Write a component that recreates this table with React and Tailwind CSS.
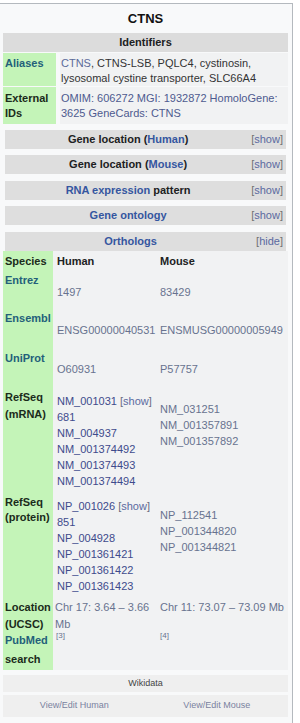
import React from "react";

const link = "text-[#3556a0]";
const lbLink = "text-[#23607a]";
const lbPlain = "text-[#1b2b1b]";

const Collapsible = ({ children, toggle = "show", mt = "mt-[6px]" }) => (
  <div className={`${mt} mx-[2px] h-[19px] bg-[#dedede] flex items-center pr-[3px]`}>
    <div className="flex-1 text-center font-bold">{children}</div>
    <span className="text-[#707070]">
      [<span className="text-[#5b6aa0]">{toggle}</span>]
    </span>
  </div>
);

const OrthoRow = ({ label, labelClass, h, lpt, human, hpt, mouse, mpt, lh = "leading-[16px]" }) => (
  <div className={`grid grid-cols-[50px_107px_1fr] ${h}`}>
    <div className={`bg-[#c4f4b8] font-bold pl-[2px] ${lpt} ${lh} ${labelClass}`}>{label}</div>
    <div className={`pl-[4px] ${hpt} leading-[16px]`}>{human}</div>
    <div className={`${mpt} leading-[16px]`}>{mouse}</div>
  </div>
);

const App = () => {
  const humanNm = ["NM_004937", "NM_001374492", "NM_001374493", "NM_001374494"];
  const humanNp = ["NP_004928", "NP_001361421", "NP_001361422", "NP_001361423"];

  return (
    <div className="w-[300px] h-[723px] bg-white overflow-hidden font-['Liberation_Sans',Arial,sans-serif] text-[11px] text-[#202122]">
      <div className="mt-[3px] w-[293px] h-[730px] border-t border-r border-[#b4b9be] bg-[#f8f9fa] pl-[3px] pr-[4px]">
        {/* title */}
        <div className="h-[29px] flex items-center justify-center font-bold text-[13px] text-[#111]">
          CTNS
        </div>

        <div className="h-[19px] bg-[#dcdcdc] flex items-center justify-center font-bold">
          Identifiers
        </div>

        {/* Aliases */}
        <div className="mt-[1px] grid grid-cols-[53px_1fr] gap-x-[4px] h-[33px]">
          <div className={`bg-[#c4f4b8] font-bold pl-[2px] pt-[3px] leading-[15px] ${lbLink}`}>Aliases</div>
          <div className="bg-[#f1f2f3] pl-[1px] pt-[3px] leading-[15px] text-[#333]">
            <span className="text-[#5b6a9a]">CTNS</span>, CTNS-LSB, PQLC4, cystinosin, lysosomal cystine transporter, SLC66A4
          </div>
        </div>

        {/* External IDs */}
        <div className="mt-[1px] grid grid-cols-[53px_1fr] gap-x-[4px] h-[37px]">
          <div className={`bg-[#c4f4b8] font-bold pl-[2px] pt-[4px] leading-[15px] ${lbPlain}`}>
            External IDs
          </div>
          <div className="bg-[#f1f2f3] pl-[1px] pt-[4px] leading-[15px] text-[#4e5a8f]">
            OMIM: 606272 MGI: 1932872 HomoloGene: 3625 GeneCards: CTNS
          </div>
        </div>

        <Collapsible>
          Gene location (<span className={link}>Human</span>)
        </Collapsible>
        <Collapsible>
          Gene location (<span className={link}>Mouse</span>)
        </Collapsible>
        <Collapsible mt="mt-[7px]">
          <span className={link}>RNA expression</span> pattern
        </Collapsible>
        <Collapsible>
          <span className={link}>Gene ontology</span>
        </Collapsible>
        <Collapsible mt="mt-[7px]" toggle="hide">
          <span className={link}>Orthologs</span>
        </Collapsible>

        {/* Orthologs table */}
        <div className="bg-[#f1f2f3] text-[#68728f]">
          <OrthoRow
            label="Species"
            labelClass={lbPlain}
            h="h-[19px]"
            lpt="pt-[2px]"
            hpt="pt-[2px]"
            mpt="pt-[2px]"
            human={<span className="font-bold text-[#202122]">Human</span>}
            mouse={<span className="font-bold text-[#202122]">Mouse</span>}
          />
          <OrthoRow label="Entrez" labelClass={lbLink} h="h-[39px]" lpt="pt-[2px]" hpt="pt-[14px]" mpt="pt-[14px]" human="1497" mouse="83429" />
          <OrthoRow
            label="Ensembl"
            labelClass={lbLink}
            h="h-[39px]"
            lpt="pt-[1px]"
            hpt="pt-[13px]"
            mpt="pt-[13px]"
            human="ENSG00000040531"
            mouse="ENSMUSG00000005949"
          />
          <OrthoRow label="UniProt" labelClass={lbLink} h="h-[40px]" lpt="pt-[2px]" hpt="pt-[13px]" mpt="pt-[13px]" human="O60931" mouse="P57757" />
          <OrthoRow
            label="RefSeq (mRNA)"
            labelClass={lbPlain}
            h="h-[105px]"
            lpt="pt-[1px]"
            lh="leading-[17px]"
            hpt="pt-[5px]"
            mpt="pt-[13px]"
            human={
              <div className="text-[#3e4b8c]">
                <div>
                  NM_001031 <span className="text-[#6a6a80]">[<span className="text-[#5b6aa0]">show</span>]</span>
                </div>
                <div>681</div>
                {humanNm.map((n) => (
                  <div key={n}>{n}</div>
                ))}
              </div>
            }
            mouse={
              <div>
                <div>NM_031251</div>
                <div>NM_001357891</div>
                <div>NM_001357892</div>
              </div>
            }
          />
          <OrthoRow
            label="RefSeq (protein)"
            labelClass={lbPlain}
            h="h-[105px]"
            lpt="pt-[2px]"
            lh="leading-[15px]"
            hpt="pt-[5px]"
            mpt="pt-[14px]"
            human={
              <div className="text-[#3e4b8c]">
                <div>
                  NP_001026 <span className="text-[#6a6a80]">[<span className="text-[#5b6aa0]">show</span>]</span>
                </div>
                <div>851</div>
                {humanNp.map((n) => (
                  <div key={n}>{n}</div>
                ))}
              </div>
            }
            mouse={
              <div>
                <div>NP_112541</div>
                <div>NP_001344820</div>
                <div>NP_001344821</div>
              </div>
            }
          />
          <div className="grid grid-cols-[50px_107px_1fr] h-[32px]">
            <div className={`bg-[#c4f4b8] font-bold pl-[2px] pt-[1px] leading-[17px] ${lbPlain}`}>Location (UCSC)</div>
            <div className="pl-[2px] pt-[1px] leading-[17px]">Chr 17: 3.64 – 3.66 Mb</div>
            <div className="pt-[1px] leading-[17px]">Chr 11: 73.07 – 73.09 Mb</div>
          </div>
          <div className="grid grid-cols-[50px_107px_1fr] h-[40px]">
            <div className="bg-[#c4f4b8] font-bold pl-[2px] pt-[1px] leading-[19px]">
              <span className={lbLink}>PubMed</span> <span className={lbPlain}>search</span>
            </div>
            <div className="pl-[3px] text-[8px] leading-[12px]">[3]</div>
            <div className="text-[8px] leading-[12px]">[4]</div>
          </div>
        </div>

        {/* footer */}
        <div className="mt-[5px] h-[17px] bg-[#efefef] flex items-center justify-center text-[9px] text-[#444]">
          Wikidata
        </div>
        <div className="mt-[3px] h-[22px] bg-[#efefef] grid grid-cols-2 items-center text-[9px] text-[#7a82a0]">
          <div className="text-center">View/Edit Human</div>
          <div className="text-center">View/Edit Mouse</div>
        </div>
      </div>
    </div>
  );
};

export default App;
